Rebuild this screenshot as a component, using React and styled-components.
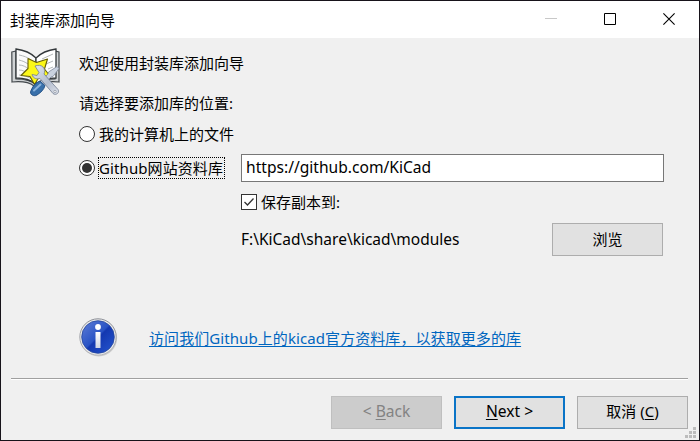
import React from 'react';
import styled, { createGlobalStyle } from 'styled-components';

const Global = createGlobalStyle`
  *, *::before, *::after { box-sizing: border-box; }
  html, body { margin: 0; padding: 0; overflow: hidden; }
`;

const Window = styled.div`
  width: 700px;
  height: 441px;
  display: flex;
  flex-direction: column;
  border: 1px solid #17131a;
  background: #f0f0f0;
  color: #000;
  font: 15px/20px 'Noto Sans', 'Noto Sans CJK SC', sans-serif;
`;

const TitleBar = styled.header`
  height: 37px;
  flex: none;
  display: flex;
  align-items: center;
  justify-content: space-between;
  padding-left: 9px;
  background: #fff;
`;

const WindowControls = styled.div`
  display: flex;
`;

const ControlButton = styled.button`
  width: ${(p) => p.$width || 58}px;
  height: 37px;
  padding: 0 0 1px;
  border: 0;
  background: none;
  display: flex;
  align-items: center;
  justify-content: center;
  svg { display: block; }
`;

const Label = styled.span`
  white-space: pre;
`;

const PathLabel = styled(Label)`
  font-size: 15.5px;
  padding-bottom: 1px;
`;

const Page = styled.main`
  height: 340px;
  flex: none;
  display: flex;
  padding: 0 11px 0 10px;
`;

const IconColumn = styled.div`
  width: 68px;
  flex: none;
  padding-top: 8px;
  svg { display: block; }
`;

const Form = styled.div`
  flex: 1;
  display: flex;
  flex-direction: column;
`;

const Row = styled.div`
  display: flex;
  align-items: center;
  justify-content: ${(p) => (p.$spread ? 'space-between' : 'flex-start')};
  flex: none;
  height: ${(p) => p.$height}px;
  margin-top: ${(p) => p.$top || 0}px;
  padding-left: ${(p) => p.$indent || 0}px;
  padding-right: ${(p) => p.$right || 0}px;
`;

const Radio = styled.span`
  width: 16px;
  height: 16px;
  flex: none;
  display: grid;
  place-items: center;
  margin-right: 3px;
  border: 1px solid #333;
  border-radius: 50%;
  background: #fff;
  &::after {
    content: '';
    width: 10px;
    height: 10px;
    border-radius: 50%;
    background: ${(p) => (p.$checked ? '#333' : 'transparent')};
  }
`;

const RadioLabel = styled.span`
  display: flex;
  align-items: center;
  height: 22px;
  flex: none;
  white-space: nowrap;
  border: 1px ${(p) => (p.$focused ? 'dotted #000' : 'solid transparent')};
  width: ${(p) => (p.$focused ? '127px' : 'auto')};
  letter-spacing: ${(p) => (p.$focused ? 0.1 : 0)}px;
`;

const UrlInput = styled.input`
  width: 423px;
  height: 28px;
  margin-left: 16px;
  padding: 0 4px 2px;
  border: 1px solid #777;
  border-radius: 0;
  outline: 0;
  background: #fff;
  color: #000;
  font: inherit;
  font-size: 15.6px;
`;

const CheckBox = styled.span`
  width: 16px;
  height: 16px;
  flex: none;
  margin-right: 4px;
  border: 1px solid #333;
  background: #fff;
  svg { display: block; }
`;

const Button = styled.button`
  width: 111px;
  height: 33px;
  flex: none;
  padding: 0 0 1px;
  border: ${(p) => (p.$primary ? '2px solid #0a74c7' : '1px solid #adadad')};
  border-color: ${(p) => p.disabled && '#bfbfbf'};
  border-radius: 0;
  background: ${(p) => (p.disabled ? '#ccc' : '#e1e1e1')};
  color: ${(p) => (p.disabled ? '#838383' : '#000')};
  font: inherit;
  u { text-underline-offset: 2px; text-decoration-thickness: 1px; }
`;

const WizardButton = styled(Button)`
  padding-bottom: 3px;
  font-size: ${(p) => p.$size || 15.6}px;
`;

const Link = styled.a`
  margin-left: 30px;
  white-space: nowrap;
  color: #0066bf;
  letter-spacing: 0.08px;
  text-decoration: underline;
  text-decoration-thickness: 1px;
  text-underline-offset: 2px;
  text-decoration-skip-ink: none;
`;

const Footer = styled.footer`
  position: relative;
  flex: 1;
  margin: 0 11px 0 10px;
  padding-top: 17px;
  display: flex;
  justify-content: flex-end;
  gap: 12px;
  border-top: 1px solid #a0a0a0;
  box-shadow: inset 0 1px #fff;
`;

const Grip = styled.svg`
  position: absolute;
  right: -8px;
  bottom: 2px;
`;

const BookIcon = () => (
  <svg width="51" height="52" viewBox="0 0 51 52">
    <defs>
      <linearGradient id="steel" x1="0" y1="0" x2="1" y2="1">
        <stop offset="0" stopColor="#e4e9f2" />
        <stop offset="0.6" stopColor="#b4bdce" />
        <stop offset="1" stopColor="#dfe3eb" />
      </linearGradient>
    </defs>
    <path d="M.8 6 5 5v28c9 0 16 2 20 6 5-4 10-6 19-6V5l4 1v30c-10-1-17 0-22 4h-3c-5-4-12-5-22-4z" fill="#d0d3d5" stroke="#44494d" strokeWidth="1.2" />
    <path d="M5 3c8 1 15 4 20 9v26c-5-4-11-6-20-6z" fill="#fafafa" stroke="#33383b" strokeWidth="1.3" />
    <path d="M45 3c-8 1-15 4-20 9v26c5-4 11-6 20-6z" fill="#fff" stroke="#33383b" strokeWidth="1.3" />
    <path d="M8 9c5 1 8 2 12 5M8 14c4 1 6 2 9 4M8 19c4 0 7 2 10 4M8 24c4 0 7 2 10 4M8 29c5 0 9 2 13 4M31 13l11-5M35 18l7-3M37 23l5-2M38 28l5-1" fill="none" stroke="#b2b6b8" />
    <path d="m17 12.5 8.5 4 11-3.5-3 10 5.5 7-10.500.5-5 8-4.500-8-9-1 7-7z" fill="#fbf719" stroke="#665f08" strokeWidth="1.1" strokeLinejoin="round" />
    <path d="m46 20.500 2 2-6 8-2 .5-8 8-3-3 8-8 .5-2z" fill="#c9d1de" stroke="#7f899c" strokeWidth=".8" />
    <path d="M24 20c3-1 6-1 8 1s2 5 1 7l14 15.500c2 3-2 6.500-5 4L29 32.500c-3 1-7 0-8-4l5 1 2-3z" fill="url(#steel)" stroke="#717c90" strokeWidth=".8" />
    <circle cx="44" cy="45.500" r="1.2" fill="#f4f4f4" stroke="#7d8797" strokeWidth=".6" />
    <path d="M20 44.500c2-5 5-8 9-9.500l5 4.500c-1 4-4 7-8 9.500-3 2-8-.5-6-4.500z" fill="#3970aa" stroke="#1c4b81" strokeWidth=".9" />
    <path d="m23 44.500 6.500-6" stroke="#8bb3dc" strokeWidth="2" strokeLinecap="round" />
  </svg>
);

const InfoIcon = () => (
  <svg width="40" height="40" viewBox="0 0 40 40">
    <defs>
      <linearGradient id="blue" x1="0" y1="0" x2="1" y2="1">
        <stop offset="0" stopColor="#607ed7" />
        <stop offset=".48" stopColor="#2953c5" />
        <stop offset=".52" stopColor="#1438b0" />
        <stop offset="1" stopColor="#2557d0" />
      </linearGradient>
      <linearGradient id="rim" x1="0" y1="0" x2="0" y2="1">
        <stop offset="0" stopColor="#8b8e96" />
        <stop offset="1" stopColor="#b7b8bc" />
      </linearGradient>
      <linearGradient id="stem" x1="0" y1="0" x2="0" y2="1">
        <stop offset="0" stopColor="#fff" />
        <stop offset="1" stopColor="#cfd5e4" />
      </linearGradient>
    </defs>
    <circle cx="19.7" cy="20" r="18.4" fill="#ccc" />
    <circle cx="19" cy="19" r="18.2" fill="#e8e8e8" stroke="url(#rim)" />
    <circle cx="19" cy="19" r="16.3" fill="url(#blue)" stroke="#24469d" strokeWidth=".8" />
    <circle cx="19" cy="9" r="2.9" fill="#fff" />
    <path d="M16.5 14h5v16h-5z" fill="url(#stem)" />
  </svg>
);

const gripDots = [[8, 0], [4, 4], [8, 4], [0, 8], [4, 8], [8, 8]];

export default function App() {
  return (
    <>
      <Global />
      <Window>
        <TitleBar>
          <Label>封装库添加向导</Label>
          <WindowControls>
            <ControlButton $width={60} aria-label="最小化">
              <svg width="14" height="12"><path d="M1 5.5h12" stroke="#c8c8c8" /></svg>
            </ControlButton>
            <ControlButton aria-label="最大化">
              <svg width="12" height="12"><path d="M.5.5h11v11H.5z" fill="none" stroke="#000" /></svg>
            </ControlButton>
            <ControlButton $width={60} aria-label="关闭">
              <svg width="12" height="12"><path d="m.4.4 11.2 11.2m0-11.2L.4 11.6" stroke="#000" strokeWidth="1.1" /></svg>
            </ControlButton>
          </WindowControls>
        </TitleBar>
        <Page>
          <IconColumn><BookIcon /></IconColumn>
          <Form>
            <Row $height={20} $top={15}><Label>欢迎使用封装库添加向导</Label></Row>
            <Row $height={20} $top={20}><Label>请选择要添加库的位置:</Label></Row>
            <Row $height={22} $top={10}>
              <Radio /><RadioLabel>我的计算机上的文件</RadioLabel>
            </Row>
            <Row $height={28} $top={9}>
              <Radio $checked />
              <RadioLabel $focused>Github网站资料库</RadioLabel>
              <UrlInput defaultValue="https://github.com/KiCad" />
            </Row>
            <Row $height={20} $top={10} $indent={162}>
              <CheckBox>
                <svg width="14" height="14"><path d="m2.5 7 3 3 6-6.5" fill="none" stroke="#333" strokeWidth="1.3" /></svg>
              </CheckBox>
              <Label>保存副本到:</Label>
            </Row>
            <Row $height={33} $top={11} $indent={162} $right={25} $spread>
              <PathLabel>F:\KiCad\share\kicad\modules</PathLabel>
              <Button>浏览</Button>
            </Row>
            <Row $height={40} $top={62}>
              <InfoIcon />
              <Link>访问我们Github上的kicad官方资料库，以获取更多的库</Link>
            </Row>
          </Form>
        </Page>
        <Footer>
          <WizardButton disabled>&lt; <u>B</u>ack</WizardButton>
          <WizardButton $primary><u>N</u>ext &gt;</WizardButton>
          <WizardButton $size={15}>取消 (<u>C</u>)</WizardButton>
          <Grip width="11" height="11">
            {gripDots.map(([x, y]) => <rect key={`${x}-${y}`} x={x} y={y} width="3" height="3" fill="#bcbcbc" />)}
          </Grip>
        </Footer>
      </Window>
    </>
  );
}
